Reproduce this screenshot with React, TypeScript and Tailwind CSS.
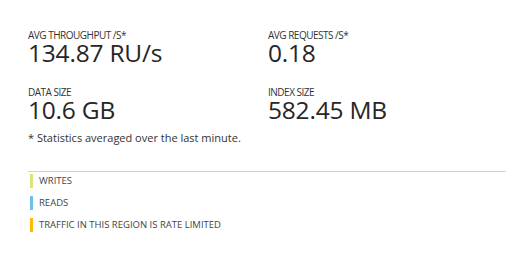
import clsx from 'clsx';

const STATS = [
  { label: 'AVG THROUGHPUT /S*', value: '134.87 RU/s' },
  { label: 'AVG REQUESTS /S*', value: '0.18' },
  { label: 'DATA SIZE', value: '10.6 GB' },
  { label: 'INDEX SIZE', value: '582.45 MB' },
];

const LEGEND = [
  { label: 'WRITES', color: 'bg-[#dde37b]' },
  { label: 'READS', color: 'bg-[#6cc0ea]' },
  { label: 'TRAFFIC IN THIS REGION IS RATE LIMITED', color: 'bg-[#ffb900]' },
];

export default function App() {
  return (
    <div
      className="w-[523px] h-[280px] bg-white text-[#262626] pl-[28px] pr-[17px] pt-[29px]"
      style={{ fontFamily: '"Open Sans", "Noto Sans", sans-serif' }}
    >
      <div className="grid grid-cols-[240px_1fr] gap-y-[21px]">
        {STATS.map((s) => (
          <div key={s.label}>
            <div className="text-[10px] leading-[12px] tracking-[-0.5px] text-[#333]">
              {s.label}
            </div>
            <div className="text-[24.5px] leading-[24px] tracking-[-0.2px]">{s.value}</div>
          </div>
        ))}
      </div>

      <p className="text-[11px] leading-[14px] text-[#333] mt-[9px]">
        * Statistics averaged over the last minute.
      </p>

      {/* Legend */}
      <div className="mt-[26px] border-t border-[#d0d0d0] pt-[2px] flex flex-col gap-[8px]">
        {LEGEND.map((l) => (
          <div key={l.label} className="flex items-center h-[14px] gap-[6px] pl-[2px]">
            <span className={clsx('w-[3px] h-[14px] shrink-0', l.color)} />
            <span className="text-[9.5px] leading-[12px] text-[#444]">{l.label}</span>
          </div>
        ))}
      </div>
    </div>
  );
}
